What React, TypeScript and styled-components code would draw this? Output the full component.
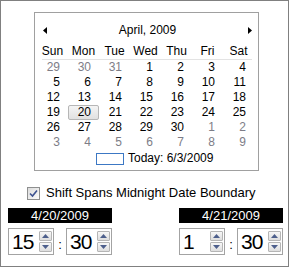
import React from "react";
import styled, { createGlobalStyle } from "styled-components";

const GlobalStyle = createGlobalStyle`
  html, body {
    margin: 0;
    padding: 0;
    background: #fff;
  }
  body {
    font-family: "Liberation Sans", Arial, sans-serif;
  }
`;

type Day = { n: number; other?: boolean };

const weekDays = ["Sun", "Mon", "Tue", "Wed", "Thu", "Fri", "Sat"];

const buildDays = (): Array<Day> => {
  const days: Array<Day> = [29, 30, 31].map((n) => ({ n, other: true }));
  for (let i = 1; i <= 30; i++) days.push({ n: i });
  for (let i = 1; i <= 9; i++) days.push({ n: i, other: true });
  return days;
};

const Arrow: React.FC<{ dir: "left" | "right" }> = ({ dir }) => (
  <svg width="4" height="7" viewBox="0 0 4 7">
    {dir === "left" ? (
      <polygon points="4,0 4,7 0,3.5" fill="#000" />
    ) : (
      <polygon points="0,0 0,7 4,3.5" fill="#000" />
    )}
  </svg>
);

const SpinArrow: React.FC<{ up?: boolean }> = ({ up }) => (
  <svg width="7" height="4" viewBox="0 0 7 4">
    {up ? (
      <polygon points="0,4 7,4 3.5,0" fill="#4d5f8c" />
    ) : (
      <polygon points="0,0 7,0 3.5,4" fill="#4d5f8c" />
    )}
  </svg>
);

const TimeBox: React.FC<{ value: string }> = ({ value }) => (
  <SpinBox>
    <SpinValue>{value}</SpinValue>
    <SpinButtons>
      <SpinButton>
        <SpinArrow up />
      </SpinButton>
      <SpinButton>
        <SpinArrow />
      </SpinButton>
    </SpinButtons>
  </SpinBox>
);

const DateGroup: React.FC<{ date: string; hour: string; minute: string }> = ({
  date,
  hour,
  minute,
}) => (
  <Group>
    <DateBar>{date}</DateBar>
    <TimeRow>
      <TimeBox value={hour} />
      <Colon>:</Colon>
      <TimeBox value={minute} />
    </TimeRow>
  </Group>
);

export default function App() {
  const days = buildDays();
  return (
    <>
      <GlobalStyle />
      <Frame>
        <Calendar>
          <Header>
            <Arrow dir="left" />
            <Title>April, 2009</Title>
            <Arrow dir="right" />
          </Header>
          <Grid>
            {weekDays.map((d) => (
              <WeekDay key={d}>{d}</WeekDay>
            ))}
          </Grid>
          <Divider />
          <Grid>
            {days.map((d, i) => (
              <Cell key={i} $other={d.other} $selected={!d.other && d.n === 20}>
                {d.n}
              </Cell>
            ))}
          </Grid>
          <TodayRow>
            <TodayBox />
            <span>Today: 6/3/2009</span>
          </TodayRow>
        </Calendar>

        <CheckRow>
          <CheckBox>
            <svg width="9" height="9" viewBox="0 0 9 9">
              <path
                d="M1 4.5 L3.5 7 L8 1.5"
                fill="none"
                stroke="#3d5290"
                strokeWidth="1.6"
              />
            </svg>
          </CheckBox>
          <CheckLabel>Shift Spans Midnight Date Boundary</CheckLabel>
        </CheckRow>

        <Bottom>
          <DateGroup date="4/20/2009" hour="15" minute="30" />
          <DateGroup date="4/21/2009" hour="1" minute="30" />
        </Bottom>
      </Frame>
    </>
  );
}

const Frame = styled.div`
  box-sizing: border-box;
  width: 289px;
  height: 267px;
  border: 1px solid #808080;
  background: #fff;
  padding-top: 11px;
`;

const Calendar = styled.div`
  box-sizing: border-box;
  width: 225px;
  height: 159px;
  margin-left: 33px;
  border: 1px solid #a0a0a0;
  padding-top: 10px;
  font-size: 12px;
  color: #000;
`;

const Header = styled.div`
  display: flex;
  align-items: center;
  justify-content: space-between;
  height: 15px;
  padding: 0 6px 0 8px;
`;

const Title = styled.div`
  line-height: 15px;
`;

const Grid = styled.div`
  display: grid;
  grid-template-columns: repeat(7, 31px);
  margin-left: 2px;
`;

const WeekDay = styled.div`
  height: 15px;
  line-height: 15px;
  text-align: center;
  margin-top: 6px;
`;

const Divider = styled.div`
  width: 210px;
  height: 1px;
  margin-left: 7px;
  background: #e3e3e3;
`;

const Cell = styled.div<{ $other?: boolean; $selected?: boolean }>`
  box-sizing: border-box;
  height: 15px;
  line-height: 13px;
  padding-right: 7px;
  text-align: right;
  border: 1px solid ${(p) => (p.$selected ? "#b6b6b6" : "transparent")};
  border-radius: 2px;
  background: ${(p) =>
    p.$selected ? "linear-gradient(#f4f4f4, #e1e1e1)" : "transparent"};
  color: ${(p) => (p.$other ? "#7d7d87" : "#000")};
`;

const TodayRow = styled.div`
  display: flex;
  align-items: center;
  height: 15px;
  margin-top: 1px;
  padding-left: 61px;
  line-height: 15px;
`;

const TodayBox = styled.div`
  box-sizing: border-box;
  width: 28px;
  height: 12px;
  border: 1px solid #3c78c4;
  margin-right: 4px;
`;

const CheckRow = styled.div`
  display: flex;
  align-items: flex-start;
  margin: 14px 0 0 26px;
  height: 15px;
`;

const CheckBox = styled.div`
  box-sizing: border-box;
  width: 13px;
  height: 13px;
  margin-top: 2px;
  border: 1px solid #8e8f8f;
  background: linear-gradient(135deg, #dcdcdc, #fbfbfb);
  display: flex;
  align-items: center;
  justify-content: center;
`;

const CheckLabel = styled.span`
  margin-left: 6px;
  font-size: 13px;
  line-height: 15px;
  color: #000;
`;

const Bottom = styled.div`
  display: flex;
  justify-content: space-between;
  margin: 8px 5px 0 7px;
`;

const Group = styled.div`
  width: 104px;
`;

const DateBar = styled.div`
  height: 15px;
  line-height: 15px;
  background: #000;
  color: #fff;
  font-size: 13px;
  text-align: center;
`;

const TimeRow = styled.div`
  display: flex;
  align-items: center;
  margin-top: 5px;
`;

const SpinBox = styled.div`
  box-sizing: border-box;
  width: 46px;
  height: 27px;
  border: 1px solid #a3a3a3;
  display: flex;
  align-items: center;
  justify-content: space-between;
  padding: 0 1px 0 3px;
`;

const SpinValue = styled.span`
  font-size: 21px;
  line-height: 25px;
  letter-spacing: -1px;
  color: #000;
`;

const SpinButtons = styled.div`
  display: flex;
  flex-direction: column;
  gap: 1px;
`;

const SpinButton = styled.div`
  box-sizing: border-box;
  width: 13px;
  height: 10px;
  border: 1px solid #b5b5b5;
  border-radius: 1px;
  background: linear-gradient(#f7f7f7, #dedede);
  display: flex;
  align-items: center;
  justify-content: center;
`;

const Colon = styled.span`
  flex: 1;
  text-align: center;
  font-size: 13px;
  line-height: 15px;
  padding-top: 6px;
`;
